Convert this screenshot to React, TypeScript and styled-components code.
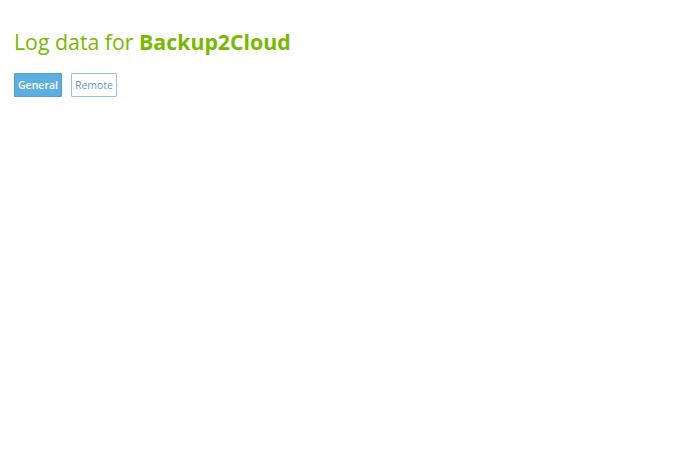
import styled, { createGlobalStyle } from 'styled-components'
import { useState } from 'react'

const GlobalStyle = createGlobalStyle`
  html, body {
    margin: 0;
    padding: 0;
    background: #ffffff;
    font-family: 'Open Sans', 'Noto Sans', sans-serif;
  }
`

const Page = styled.div`
  padding: 28px 14px;
`

const Title = styled.h1`
  margin: 0 0 17px 0;
  font-size: 21.3px;
  font-weight: 400;
  line-height: 28px;
  color: #76b900;

  b {
    font-weight: 700;
  }
`

const Tabs = styled.div`
  display: flex;
  gap: 9px;
`

const Tab = styled.button<{ active?: boolean }>`
  height: 24px;
  padding: 0 3px;
  font-family: 'Open Sans', 'Noto Sans', sans-serif;
  font-size: 10.5px;
  font-weight: ${({ active }) => (active ? 600 : 400)};
  border-radius: 1px;
  cursor: pointer;
  border: 1px solid ${({ active }) => (active ? '#4f9fd3' : '#8cc4ea')};
  background: ${({ active }) => (active ? '#5caee1' : '#ffffff')};
  color: ${({ active }) => (active ? '#ffffff' : '#5d9dd0')};
`

const tabs = ['General', 'Remote']

export default function App() {
  const [current, setCurrent] = useState('General')

  return (
    <>
      <GlobalStyle />
      <Page>
        <Title>
          Log data for <b>Backup2Cloud</b>
        </Title>
        <Tabs>
          {tabs.map((t) => (
            <Tab key={t} active={current === t} onClick={() => setCurrent(t)}>
              {t}
            </Tab>
          ))}
        </Tabs>
      </Page>
    </>
  )
}
